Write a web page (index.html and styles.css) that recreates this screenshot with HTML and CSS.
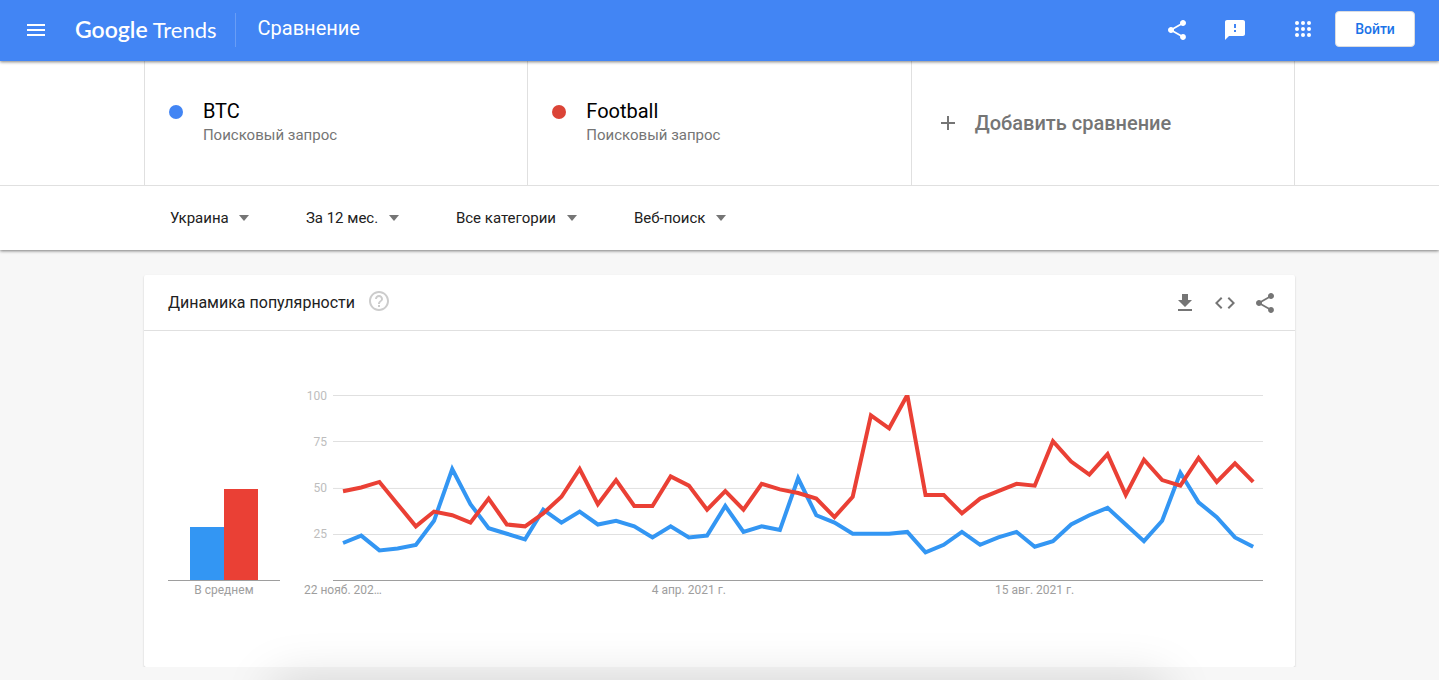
FILE: index.html
```html
<!DOCTYPE html>
<html lang="ru">
<head>
    <meta charset="UTF-8">
    <meta name="viewport" content="width=device-width, initial-scale=1.0">
    <title>Сравнение - Google Trends</title>
    <link rel="stylesheet" href="styles.css">
</head>
<body>
    <header class="topbar">
        <button class="icon-btn" type="button" aria-label="Меню">
            <svg viewBox="0 0 24 24"><path d="M3 18h18v-2H3v2zm0-5h18v-2H3v2zm0-7v2h18V6H3z"/></svg>
        </button>
        <a class="logo" href="#"><span class="logo-google">Google</span><span class="logo-trends">Trends</span></a>
        <h1 class="page-title">Сравнение</h1>
        <div class="actions">
            <button class="icon-btn" type="button" aria-label="Поделиться">
                <svg viewBox="0 0 24 24"><path d="M18 16.08c-.76 0-1.44.3-1.96.77L8.91 12.7c.05-.23.09-.46.09-.7s-.04-.47-.09-.7l7.05-4.11c.54.5 1.25.81 2.04.81 1.66 0 3-1.34 3-3s-1.34-3-3-3-3 1.34-3 3c0 .24.04.47.09.7L8.04 9.81C7.5 9.31 6.79 9 6 9c-1.66 0-3 1.34-3 3s1.34 3 3 3c.79 0 1.5-.31 2.04-.81l7.12 4.16c-.05.21-.08.43-.08.65 0 1.61 1.31 2.92 2.92 2.92s2.92-1.31 2.92-2.92-1.31-2.92-2.92-2.92z"/></svg>
            </button>
            <button class="icon-btn" type="button" aria-label="Отправить отзыв">
                <svg viewBox="0 0 24 24"><path d="M20 2H4c-1.1 0-2 .9-2 2v18l4-4h14c1.1 0 2-.9 2-2V4c0-1.1-.9-2-2-2zm-7 12h-2v-2h2v2zm0-4h-2V6h2v4z"/></svg>
            </button>
            <button class="icon-btn apps" type="button" aria-label="Приложения Google">
                <svg viewBox="0 0 24 24"><circle cx="6" cy="6" r="2"/><circle cx="12" cy="6" r="2"/><circle cx="18" cy="6" r="2"/><circle cx="6" cy="12" r="2"/><circle cx="12" cy="12" r="2"/><circle cx="18" cy="12" r="2"/><circle cx="6" cy="18" r="2"/><circle cx="12" cy="18" r="2"/><circle cx="18" cy="18" r="2"/></svg>
            </button>
            <a class="login" href="#">Войти</a>
        </div>
    </header>

    <section class="explore">
        <!-- Search terms -->
        <div class="terms">
            <div class="terms-inner">
                <div class="term">
                    <span class="dot blue"></span>
                    <div>
                        <h2 class="term-name">BTC</h2>
                        <p class="term-type">Поисковый запрос</p>
                    </div>
                </div>
                <div class="term">
                    <span class="dot red"></span>
                    <div>
                        <h2 class="term-name">Football</h2>
                        <p class="term-type">Поисковый запрос</p>
                    </div>
                </div>
                <button class="add-term" type="button">
                    <svg viewBox="0 0 24 24"><path d="M19 13h-6v6h-2v-6H5v-2h6V5h2v6h6v2z"/></svg>
                    <span>Добавить сравнение</span>
                </button>
            </div>
        </div>

        <!-- Filters -->
        <form class="filters">
            <div class="filter">
                <select aria-label="Регион"><option>Украина</option></select>
                <span class="arrow"></span>
            </div>
            <div class="filter">
                <select aria-label="Период"><option>За 12 мес.</option></select>
                <span class="arrow"></span>
            </div>
            <div class="filter">
                <select aria-label="Категория"><option>Все категории</option></select>
                <span class="arrow"></span>
            </div>
            <div class="filter">
                <select aria-label="Тип поиска"><option>Веб-поиск</option></select>
                <span class="arrow"></span>
            </div>
        </form>
    </section>

    <main class="card">
        <div class="card-header">
            <h2 class="card-title">Динамика популярности</h2>
            <button class="icon-btn help" type="button" aria-label="Справка">
                <svg viewBox="0 0 24 24"><path d="M11 18h2v-2h-2v2zm1-16C6.48 2 2 6.48 2 12s4.48 10 10 10 10-4.48 10-10S17.52 2 12 2zm0 18c-4.41 0-8-3.59-8-8s3.59-8 8-8 8 3.59 8 8-3.59 8-8 8zm0-14c-2.21 0-4 1.79-4 4h2c0-1.1.9-2 2-2s2 .9 2 2c0 2-3 1.75-3 5h2c0-2.25 3-2.5 3-5 0-2.21-1.79-4-4-4z"/></svg>
            </button>
            <div class="card-actions">
                <button class="icon-btn" type="button" aria-label="Скачать CSV">
                    <svg viewBox="0 0 24 24"><path d="M19 9h-4V3H9v6H5l7 7 7-7zM5 18v2h14v-2H5z"/></svg>
                </button>
                <button class="icon-btn" type="button" aria-label="Встроить">
                    <svg viewBox="0 0 24 24"><path d="M9.4 16.6L4.8 12l4.6-4.6L8 6l-6 6 6 6 1.4-1.4zm5.2 0l4.6-4.6-4.6-4.6L16 6l6 6-6 6-1.4-1.4z"/></svg>
                </button>
                <button class="icon-btn" type="button" aria-label="Поделиться">
                    <svg viewBox="0 0 24 24"><path d="M18 16.08c-.76 0-1.44.3-1.96.77L8.91 12.7c.05-.23.09-.46.09-.7s-.04-.47-.09-.7l7.05-4.11c.54.5 1.25.81 2.04.81 1.66 0 3-1.34 3-3s-1.34-3-3-3-3 1.34-3 3c0 .24.04.47.09.7L8.04 9.81C7.5 9.31 6.79 9 6 9c-1.66 0-3 1.34-3 3s1.34 3 3 3c.79 0 1.5-.31 2.04-.81l7.12 4.16c-.05.21-.08.43-.08.65 0 1.61 1.31 2.92 2.92 2.92s2.92-1.31 2.92-2.92-1.31-2.92-2.92-2.92z"/></svg>
                </button>
            </div>
        </div>

        <div class="charts">
            <div class="average">
                <div class="bars">
                    <div class="bar blue-bar" style="height: 28.5%"></div>
                    <div class="bar red-bar" style="height: 49%"></div>
                </div>
                <div class="axis-label">В среднем</div>
            </div>
            <div class="timeline">
                <div class="plot-row">
                    <div class="y-axis">
                        <span>100</span>
                        <span>75</span>
                        <span>50</span>
                        <span>25</span>
                    </div>
                    <!-- One unit in x is a week, y is 100 minus the value -->
                    <svg class="plot" viewBox="-0.55 0 51.1 100" preserveAspectRatio="none">
                        <path class="grid" d="M-1 0.27H52M-1 25.14H52M-1 50.5H52M-1 75.4H52"/>
                        <polyline class="line line-blue" points="0,80 1,76 2,84 3,83 4,81 5,68 6,40 7,59 8,72 9,75 10,78 11,62 12,69 13,63 14,70 15,68 16,71 17,77 18,71 19,77 20,76 21,60 22,74 23,71 24,73 25,45 26,65 27,69 28,75 29,75 30,75 31,74 32,85 33,81 34,74 35,81 36,77 37,74 38,82 39,79 40,70 41,65 42,61 43,70 44,79 45,68 46,42 47,58 48,66 49,77 50,82"/>
                        <polyline class="line line-red" points="0,52 1,50 2,47 3,59 4,71 5,63 6,65 7,69 8,56 9,70 10,71 11,64 12,55 13,40 14,59 15,46 16,60 17,60 18,44 19,49 20,62 21,52 22,62 23,48 24,51 25,53 26,56 27,66 28,55 29,11 30,18 31,0 32,54 33,54 34,64 35,56 36,52 37,48 38,49 39,25 40,36 41,43 42,32 43,54 44,35 45,46 46,49 47,34 48,47 49,37 50,47"/>
                    </svg>
                </div>
                <div class="x-axis">
                    <span class="axis-label">22 нояб. 202…</span>
                    <span class="axis-label">4 апр. 2021 г.</span>
                    <span class="axis-label">15 авг. 2021 г.</span>
                </div>
            </div>
        </div>
    </main>

    <div class="snackbar"></div>
</body>
</html>
```

FILE: styles.css
```css
* {
    box-sizing: border-box;
}
body {
    margin: 0;
    font-family: Roboto, Arial, sans-serif;
    background-color: #f7f7f7;
    color: #212121;
    overflow: hidden;
}
h1, h2, p {
    margin: 0;
    font-weight: 400;
}
button {
    padding: 0;
    border: none;
    background: none;
    font-family: inherit;
    cursor: pointer;
}
svg {
    display: block;
}
.icon-btn {
    width: 24px;
    height: 24px;
    color: inherit;
}
.icon-btn svg {
    width: 24px;
    height: 24px;
    fill: currentColor;
}

/* Top bar */
.topbar {
    position: relative;
    display: flex;
    align-items: center;
    height: 61px;
    padding: 0 24px 2px;
    background-color: #4285f4;
    color: #fff;
    box-shadow: 0 1px 3px rgba(0,0,0,0.5);
}
.logo {
    display: flex;
    align-items: baseline;
    gap: 5px;
    margin-left: 27px;
    color: #fff;
    font-family: Lato, sans-serif;
    line-height: 32px;
    text-decoration: none;
}
.logo-google {
    font-size: 23px;
    font-weight: 600;
}
.logo-trends {
    font-size: 22px;
}
.page-title {
    height: 34px;
    margin-left: 18px;
    padding-left: 22px;
    border-left: 1px solid #689df6;
    font-size: 20px;
    line-height: 30px;
}
.actions {
    display: flex;
    align-items: center;
    margin-left: auto;
    gap: 34px;
}
.apps {
    margin: 0 -14px 2px 10px;
}
.login {
    width: 80px;
    height: 36px;
    margin-bottom: 2px;
    border: 1px solid #dadce0;
    border-radius: 4px;
    background-color: #fff;
    color: #1a73e8;
    font-size: 14px;
    font-weight: 500;
    line-height: 34px;
    text-align: center;
    text-decoration: none;
}

/* Terms and filters */
.explore {
    background-color: #fff;
    box-shadow: 0 1px 3px rgba(0,0,0,0.5);
}
.terms {
    border-bottom: 1px solid #e0e0e0;
}
.terms-inner {
    display: grid;
    grid-template-columns: repeat(3, 1fr);
    width: 80%;
    height: 124px;
    margin: 0 auto;
    border-right: 1px solid #e0e0e0;
}
.term {
    display: flex;
    gap: 20px;
    padding: 38px 24px;
    border-left: 1px solid #e0e0e0;
}
.dot {
    width: 14px;
    height: 14px;
    margin-top: 6px;
    border-radius: 50%;
}
.blue {
    background-color: #4285f4;
}
.red {
    background-color: #db4437;
}
.term-name {
    color: #000;
    font-size: 20px;
    line-height: 25px;
}
.term-type {
    color: #757575;
    font-size: 15px;
    line-height: 22px;
}
.add-term {
    display: flex;
    align-items: center;
    gap: 15px;
    padding-left: 24px;
    border-left: 1px solid #e0e0e0;
    color: #757575;
    font-size: 20px;
    font-weight: 500;
}
.add-term svg {
    width: 24px;
    height: 24px;
    fill: currentColor;
}
.filters {
    display: flex;
    align-items: center;
    gap: 57px;
    width: 80%;
    height: 64px;
    margin: 0 auto;
    padding-left: 26px;
}
.filter {
    display: flex;
    align-items: center;
    gap: 10px;
}
.filter select {
    appearance: none;
    padding: 0;
    border: none;
    background: none;
    color: #212121;
    font-family: inherit;
    font-size: 15px;
    line-height: 20px;
}
.arrow {
    border: 5px solid transparent;
    border-top: 6px solid #757575;
    border-bottom: none;
}

/* Chart card */
.card {
    width: 80%;
    height: 392px;
    margin: 25px auto 0;
    border-radius: 2px;
    background-color: #fff;
    box-shadow: 0 1px 2px rgba(0,0,0,0.2);
}
.card-header {
    display: flex;
    align-items: center;
    height: 56px;
    padding: 0 18px 0 24px;
    border-bottom: 1px solid #e0e0e0;
}
.card-title {
    font-size: 16px;
}
.help {
    margin: 0 0 4px 12px;
    color: #ccc;
}
.card-actions {
    display: flex;
    gap: 16px;
    margin-left: auto;
    color: #757575;
}
.charts {
    display: flex;
    gap: 23px;
    padding: 64px 32px 0 24px;
}
.average {
    width: 112px;
}
.bars {
    display: flex;
    align-items: flex-end;
    justify-content: center;
    height: 186px;
    border-bottom: 1px solid #9e9e9e;
}
.bar {
    width: 34px;
}
.blue-bar {
    background-color: #3396f3;
}
.red-bar {
    background-color: #ea4035;
}
.axis-label {
    color: #9e9e9e;
    font-size: 12px;
    line-height: 18px;
    text-align: center;
    white-space: nowrap;
}
.timeline {
    flex: 1;
}
.plot-row {
    display: flex;
    gap: 6px;
    height: 186px;
}
.y-axis {
    display: grid;
    grid-template-rows: repeat(4, 46px);
    width: 24px;
    margin-top: -6px;
    color: #bdbdbd;
    font-size: 12px;
    line-height: 14px;
    text-align: right;
}
.plot {
    flex: 1;
    min-width: 0;
    height: 186px;
    border-bottom: 1px solid #9e9e9e;
}
.grid, .line {
    fill: none;
    vector-effect: non-scaling-stroke;
}
.grid {
    stroke: #e0e0e0;
    stroke-width: 1px;
    shape-rendering: crispEdges;
}
.line {
    stroke-width: 4px;
}
.line-blue {
    stroke: #3396f3;
}
.line-red {
    stroke: #ea4035;
}
.x-axis {
    display: flex;
    justify-content: space-between;
    padding-right: calc(24% - 42px);
}
.x-axis .axis-label {
    width: 80px;
}

.snackbar {
    position: fixed;
    top: 100%;
    left: 19%;
    right: 19%;
    height: 60px;
    box-shadow: 0 0 50px rgba(0,0,0,0.15);
}
```
